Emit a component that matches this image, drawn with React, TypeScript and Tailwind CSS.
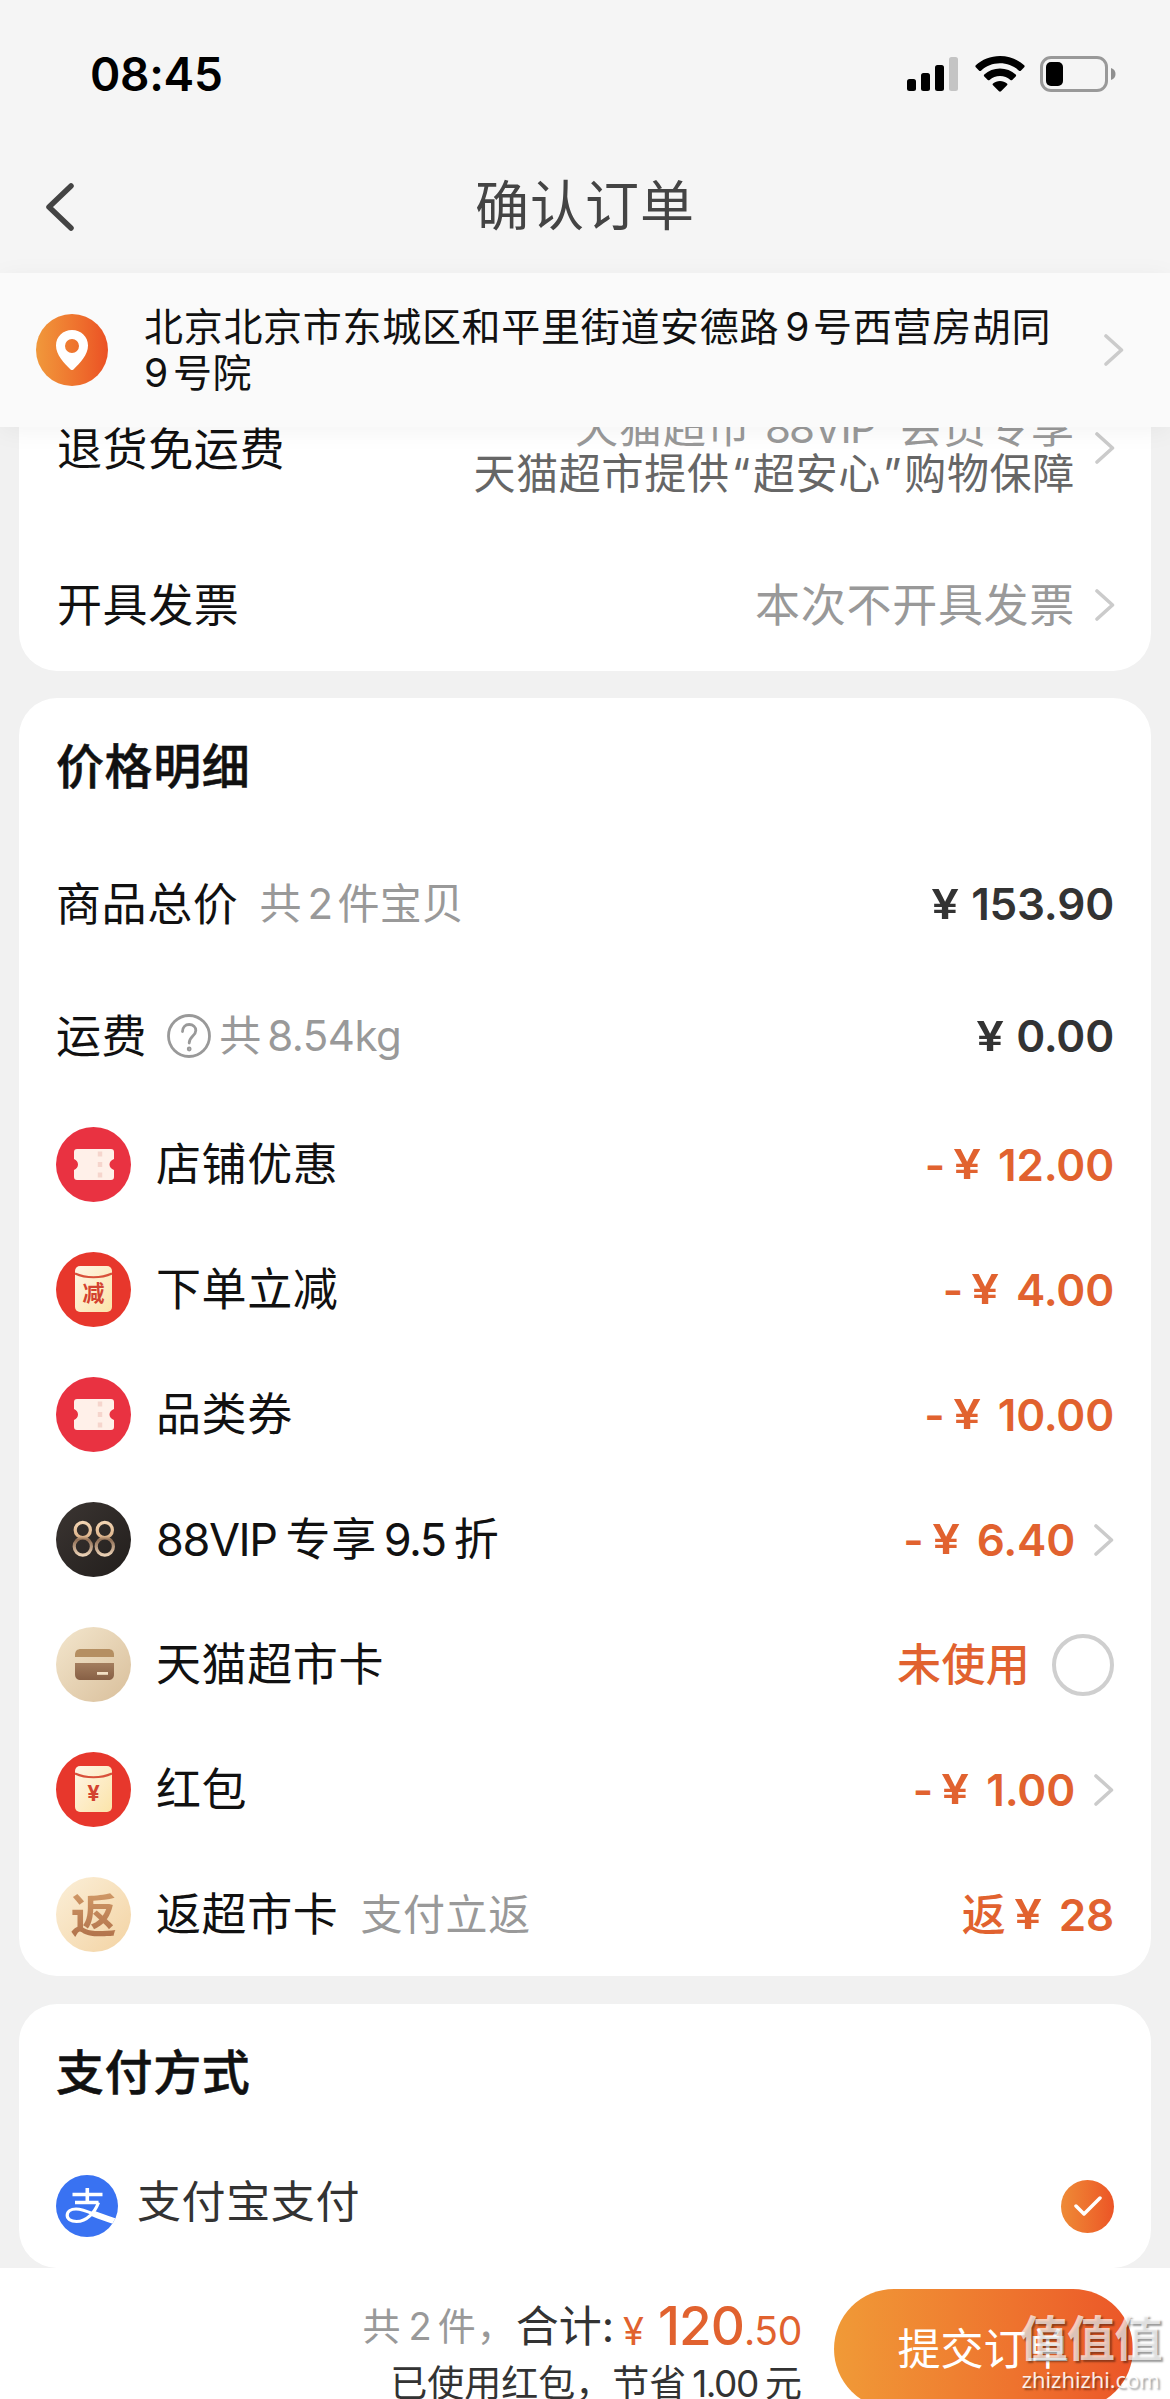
import type { ReactNode } from 'react';

interface PriceRowProps {
  icon: ReactNode;
  label: ReactNode;
  hint?: string;
  children: ReactNode;
}

const ChevronRight = ({ className = '' }: { className?: string }) => (
  <svg className={`h-8 w-5 shrink-0 ${className}`} viewBox="0 0 20 32" fill="none">
    <path d="M2 2 17.5 16 2 30" stroke="#cbcbcb" strokeWidth="3.6" strokeLinecap="round" strokeLinejoin="round" />
  </svg>
);

const StatusBar = () => (
  <div className="flex h-[147px] items-center justify-between pl-[90px] pr-[54px]">
    <span className="text-[46px] font-semibold leading-none tracking-[-0.3px] text-black">08:45</span>
    <div className="flex items-center">
      <svg className="h-[36px] w-[52px]" viewBox="0 0 52 36">
        <rect x="0" y="23" width="9" height="12" rx="2.5" fill="#000" />
        <rect x="14" y="17" width="9" height="18" rx="2.5" fill="#000" />
        <rect x="28" y="9" width="9" height="26" rx="2.5" fill="#000" />
        <rect x="42" y="1" width="9" height="34" rx="2.5" fill="#c4c4c4" />
      </svg>
      <svg className="ml-4 h-[36px] w-[50px]" viewBox="0 0 50 36">
        <path d="M25 0C15.600 0 7 3.500 .8 9.300c-.6.600-.6 1.300 0 1.900l3.400 3.500c.5.500 1.200.5 1.800 0C11 10 17.700 7.300 25 7.300S39 10 44 14.700c.6.500 1.300.5 1.800 0l3.400-3.500c.6-.6.6-1.300 0-1.900C43 3.500 34.400 0 25 0Z" />
        <path d="M25 12.600c-6 0-11.500 2.200-15.700 5.900-.6.600-.6 1.300 0 1.900l3.500 3.500c.5.500 1.200.5 1.800 0 2.800-2.500 6.400-4 10.400-4s7.600 1.500 10.400 4c.6.500 1.300.5 1.800 0l3.500-3.500c.6-.6.600-1.300 0-1.900-4.200-3.700-9.700-5.900-15.700-5.900Z" />
        <path d="M25 25c-2.700 0-5.100 1-7 2.500-.6.600-.6 1.200 0 1.800l6 6c.6.600 1.400.6 2 0l6-6c.6-.6.6-1.200 0-1.800-1.900-1.500-4.300-2.500-7-2.500Z" />
      </svg>
      <svg className="ml-[15px] h-[38px] w-[76px]" viewBox="0 0 76 38">
        <rect x="1.500" y="2.500" width="65" height="33" rx="9.500" fill="none" stroke="#999" strokeWidth="3" />
        <rect x="6" y="7" width="17" height="24" rx="5" fill="#000" />
        <path d="M71 13c3 1 4.500 3.300 4.500 6s-1.500 5-4.500 6Z" fill="#8f8f8f" />
      </svg>
    </div>
  </div>
);

const TicketIcon = () => (
  <svg className="size-[75px]" viewBox="0 0 75 75">
    <circle cx="37.500" cy="37.500" r="37.500" fill="#e93241" />
    <path d="M21 22h34c2 0 3 1 3 3v7c-2.800 1-4.500 3-4.500 5.500s1.700 4.500 4.500 5.500v7c0 2-1 3-3 3H21c-2 0-3-1-3-3v-7c2.500-1 4-3 4-5.500s-1.500-4.500-4-5.500v-7c0-2 1-3 3-3Z" fill="#fff0e9" />
    <path d="M44 24.500v5M44 35v5M44 45.500v5" stroke="#f6d5cd" strokeWidth="4.500" />
  </svg>
);

const EnvelopeIcon = ({ mark }: { mark: string }) => (
  <div className="relative size-[75px]">
    <svg className="size-full" viewBox="0 0 75 75">
      <defs>
        <linearGradient id="paper" x1="0" y1="0" x2="1" y2="1">
          <stop offset="0" stopColor="#fff5e6" />
          <stop offset="1" stopColor="#fbe4a9" />
        </linearGradient>
      </defs>
      <circle cx="37.500" cy="37.500" r="37.500" fill="#e7372c" />
      <rect x="19" y="14" width="37" height="46" rx="5" fill="url(#paper)" />
      <path d="M19 21.500c11 5 26 5 37 0" stroke="#d8503a" strokeWidth="2.200" fill="none" />
    </svg>
    <span className="absolute inset-x-0 top-[29px] text-center text-[22px] font-bold leading-[24px] text-[#d3422f]">{mark}</span>
  </div>
);

const Vip88Icon = () => (
  <svg className="size-[75px]" viewBox="0 0 75 75">
    <defs>
      <linearGradient id="vipBg" x1="0" y1="0" x2="1" y2="1">
        <stop offset="0" stopColor="#3b3532" />
        <stop offset="1" stopColor="#221e1c" />
      </linearGradient>
      <linearGradient id="vipGold" x1="0" y1="19" x2="0" y2="55" gradientUnits="userSpaceOnUse">
        <stop offset="0" stopColor="#f3d6b4" />
        <stop offset=".42" stopColor="#e0b78f" />
        <stop offset=".52" stopColor="#8f6e55" />
        <stop offset="1" stopColor="#f5dcc0" />
      </linearGradient>
    </defs>
    <circle cx="37.500" cy="37.500" r="37.500" fill="url(#vipBg)" />
    <g fill="none" stroke="url(#vipGold)" strokeWidth="3.200">
      <ellipse cx="26.800" cy="28" rx="7.600" ry="7.600" />
      <ellipse cx="26.800" cy="44.500" rx="8.600" ry="8.600" />
      <ellipse cx="48.800" cy="28" rx="7.600" ry="7.600" />
      <ellipse cx="48.800" cy="44.500" rx="8.600" ry="8.600" />
    </g>
  </svg>
);

const MarketCardIcon = () => (
  <svg className="size-[75px]" viewBox="0 0 75 75">
    <defs>
      <linearGradient id="cardBg" x1="0" y1="0" x2="1" y2="1">
        <stop offset="0" stopColor="#f3e6cd" />
        <stop offset="1" stopColor="#d9bf9b" />
      </linearGradient>
      <linearGradient id="cardFront" x1="0" y1="0" x2="0" y2="1">
        <stop offset="0" stopColor="#a37d5e" />
        <stop offset="1" stopColor="#876045" />
      </linearGradient>
    </defs>
    <circle cx="37.500" cy="37.500" r="37.500" fill="url(#cardBg)" />
    <path d="M19 30v-2c0-4 2-6 6-6h27c4 0 6 2 6 6v2Z" fill="#b58f62" />
    <path d="M19 36h39v11c0 4-2 6-6 6H25c-4 0-6-2-6-6Z" fill="url(#cardFront)" />
    <rect x="41" y="45" width="11" height="2.800" fill="#f1dfc4" />
  </svg>
);

const RebateIcon = () => (
  <div className="flex size-[75px] items-center justify-center rounded-full bg-gradient-to-br from-[#fbefd8] to-[#f3d3a3]">
    <span className="bg-gradient-to-b from-[#d19a68] to-[#b0714a] bg-clip-text text-[46px] font-bold leading-[50px] text-transparent">返</span>
  </div>
);

const AlipayIcon = () => (
  <svg className="size-[62px]" viewBox="0 0 62 62">
    <defs>
      <clipPath id="alipayClip">
        <circle cx="31" cy="31" r="31" />
      </clipPath>
    </defs>
    <g clipPath="url(#alipayClip)">
      <rect width="62" height="62" fill="#3972f2" />
      <g fill="none" stroke="#fff">
        <path d="M16.500 19.500h30M31.300 13v13.500M19 27.500h23.500" strokeWidth="3.600" />
        <path d="M42.500 27.500C39 37 31 46.500 20.500 46.500c-6 0-9.300-2.600-9.300-6.200 0-3.800 3.500-6.300 8.800-6.300 8 0 15 4.300 26 8.500" strokeWidth="3.200" />
        <path d="M36 38c8 3.500 15 5.500 26 9.500" strokeWidth="6" />
      </g>
    </g>
  </svg>
);

const Price = ({ value }: { value: string }) => (
  <span className="flex items-center">
    <span className="w-[28px] scale-x-[1.2] text-center text-[41px]">¥</span>
    <span className="ml-[12px] tracking-[-0.200px]">{value}</span>
  </span>
);

const Discount = ({ prefix, value }: { prefix?: string; value: string }) => (
  <span className="flex items-center">
    {prefix ? <span className="mr-[8px] font-medium">{prefix}</span> : <span className="mr-[8px]">-</span>}
    <span className="w-[28px] scale-x-[1.2] text-center text-[41px]">¥</span>
    <span className="ml-[17px] tracking-[-0.200px]">{value}</span>
  </span>
);

const PriceRow = ({ icon, label, hint, children }: PriceRowProps) => (
  <div className="flex h-[125px] items-center">
    {icon}
    <span className="ml-[25px] flex text-[45px] tracking-[0.600px]">{label}</span>
    {hint && <span className="ml-[22px] text-[42px] tracking-[0.600px] text-[#999]">{hint}</span>}
    <div className="ml-auto flex items-center text-[44px] font-semibold text-[#e1622f]">{children}</div>
  </div>
);

export default function App() {
  return (
    <div className="relative flex h-[2399px] w-[1170px] flex-col overflow-hidden bg-[#f1f1f1] font-[Inter,'Noto_Sans_CJK_SC',sans-serif] leading-none text-[#111]">
      <header className="h-[273px] shrink-0 bg-[#f5f5f5]">
        <StatusBar />
        <div className="grid h-[120px] grid-cols-[1fr_auto_1fr] items-center">
          <svg className="ml-[45px] h-[48px] w-[30px]" viewBox="0 0 30 48" fill="none">
            <path d="M26 3 4 24l22 21" stroke="#444" strokeWidth="5.500" strokeLinecap="round" strokeLinejoin="round" />
          </svg>
          <h1 className="text-[54px] tracking-[1px] text-[#444]">确认订单</h1>
        </div>
      </header>

      <section className="relative z-10 flex h-[154px] shrink-0 items-center bg-[#fafafa] pl-[36px] shadow-[0_4px_24px_rgba(0,0,0,0.05)]">
        <div className="flex size-[72px] items-center justify-center rounded-full bg-gradient-to-r from-[#f0983b] to-[#eb5024]">
          <svg className="h-[40px] w-[32px]" viewBox="0 0 32 40">
            <path fillRule="evenodd" d="M16 0C7 0 0 6.700 0 15.500 0 25 8 33 14.300 39.300c1 1 2.400 1 3.400 0C24 33 32 25 32 15.500 32 6.700 25 0 16 0Zm0 9a7 7 0 1 1 0 14 7 7 0 0 1 0-14Z" fill="#fff" />
          </svg>
        </div>
        <p className="ml-[36px] text-[39px] leading-[46px] tracking-[0.700px]">
          北京北京市东城区和平里街道安德路<span className="ml-[6px] mr-[3px]">9</span>号西营房胡同
          <br />9<span className="ml-[4px]">号院</span>
        </p>
        <ChevronRight className="ml-auto mr-[46px] h-[38px]" />
      </section>

      <main className="flex h-[1841px] shrink-0 flex-col px-[19px]">
        <section className="h-[244px] shrink-0 rounded-b-[38px] bg-white pl-[38px] pr-[36px]">
          <div className="flex h-[118px] items-start">
            <span className="text-[45px] tracking-[0.600px]">退货免运费</span>
            <div className="-mt-[23px] ml-auto mr-[20px] text-right text-[42px] leading-[46px] tracking-[0.700px] text-[#666]">
              <p className="text-[43px] tracking-[1px] text-[#999]">
                天猫超市<span className="ml-[14px] mr-[24px] text-[42px] tracking-[-1.800px]">88VIP</span>会员专享
              </p>
              <p>
                天猫超市提供<span className="mx-[2px]">“</span>超安心<span className="mx-[2px]">”</span>购物保障
              </p>
            </div>
            <ChevronRight className="mt-[5px]" />
          </div>
          <div className="flex h-[120px] items-center">
            <span className="text-[45px] tracking-[0.600px]">开具发票</span>
            <span className="ml-auto mr-[20px] text-[45px] tracking-[0.700px] text-[#999]">本次不开具发票</span>
            <ChevronRight />
          </div>
        </section>

        <section className="mt-[27px] h-[1278px] shrink-0 rounded-[38px] bg-white pl-[37px] pr-[37px]">
          <div className="flex h-[140px] items-center pb-[2px]">
            <h2 className="text-[48px] font-medium tracking-[0.600px] [-webkit-text-stroke:0.500px_#111]">价格明细</h2>
          </div>
          <div className="flex h-[132px] items-center">
            <span className="text-[45px] tracking-[0.600px]">商品总价</span>
            <span className="ml-[21px] text-[42px] tracking-[0.200px] text-[#999]">
              共<span className="ml-[6px] mr-[4px]">2</span>件宝贝
            </span>
            <div className="ml-auto text-[44px] font-semibold text-[#333]">
              <Price value="153.90" />
            </div>
          </div>
          <div className="flex h-[132px] items-center">
            <span className="text-[45px] tracking-[0.600px]">运费</span>
            <svg className="ml-[20px] size-[44px]" viewBox="0 0 44 44" fill="none" stroke="#999" strokeWidth="2.800">
              <circle cx="22" cy="22" r="20.500" />
              <path d="M15.500 17.500c0-4.300 2.800-7 6.700-7s6.600 2.500 6.600 6c0 5.500-6.600 5.500-6.600 12.500" strokeLinecap="round" />
              <circle cx="22.200" cy="35" r="1" />
            </svg>
            <span className="ml-[8px] text-[42px] text-[#999]">
              共<span className="ml-[6px] tracking-[-0.500px]">8.54kg</span>
            </span>
            <div className="ml-auto text-[44px] font-semibold text-[#333]">
              <Price value="0.00" />
            </div>
          </div>

          <PriceRow icon={<TicketIcon />} label="店铺优惠">
            <Discount value="12.00" />
          </PriceRow>
          <PriceRow icon={<EnvelopeIcon mark="减" />} label="下单立减">
            <Discount value="4.00" />
          </PriceRow>
          <PriceRow icon={<TicketIcon />} label="品类券">
            <Discount value="10.00" />
          </PriceRow>
          <PriceRow
            icon={<Vip88Icon />}
            label={
              <>
                <span className="tracking-[-1.400px]">88VIP</span>
                <span className="ml-[9px] mr-[7px]">专享</span>
                <span className="tracking-[-1.500px]">9.5</span>
                <span className="ml-[8px]">折</span>
              </>
            }
          >
            <Discount value="6.40" />
            <ChevronRight className="ml-[19px]" />
          </PriceRow>
          <PriceRow icon={<MarketCardIcon />} label="天猫超市卡">
            <span className="font-medium tracking-[0.300px]">未使用</span>
            <span className="ml-[22px] size-[62px] rounded-full border-[4px] border-[#cfcfcf]" />
          </PriceRow>
          <PriceRow icon={<EnvelopeIcon mark="¥" />} label="红包">
            <Discount value="1.00" />
            <ChevronRight className="ml-[19px]" />
          </PriceRow>
          <PriceRow icon={<RebateIcon />} label="返超市卡" hint="支付立返">
            <Discount prefix="返" value="28" />
          </PriceRow>
        </section>

        <section className="mt-[28px] h-[264px] shrink-0 rounded-[38px] bg-white pl-[37px] pr-[37px]">
          <div className="flex h-[140px] items-center pb-[2px]">
            <h2 className="text-[48px] font-medium tracking-[0.600px] [-webkit-text-stroke:0.500px_#111]">支付方式</h2>
          </div>
          <div className="flex h-[124px] items-center">
            <AlipayIcon />
            <span className="ml-[19px] pb-[9px] text-[44px] tracking-[0.600px] text-[#333]">支付宝支付</span>
            <div className="ml-auto flex size-[53px] items-center justify-center rounded-full bg-gradient-to-r from-[#ee8a36] to-[#ec5426]">
              <svg className="h-[20px] w-[28px]" viewBox="0 0 28 20" fill="none">
                <path d="m2 10 8 8L26 2" stroke="#fff" strokeWidth="3.500" strokeLinecap="round" strokeLinejoin="round" />
              </svg>
            </div>
          </div>
        </section>
      </main>

      <footer className="flex h-[162px] shrink-0 items-start justify-end bg-white pr-[37px] pt-[21px]">
        <div className="mr-[32px] flex flex-col items-end">
          <div className="flex h-[74px] items-center">
            <span className="text-[38px] tracking-[1px] text-[#999]">
              共<span className="ml-[7px] mr-[5px]">2</span>件，
            </span>
            <span className="text-[43px] text-[#333]">合计:</span>
            <span className="ml-[9px] flex items-baseline text-[#e1622f]">
              <span className="text-[38px]">¥</span>
              <span className="ml-[14px] text-[53px] font-medium tracking-[-1px]">120</span>
              <span className="text-[39px] tracking-[-0.300px]">.50</span>
            </span>
          </div>
          <p className="flex h-[40px] items-center whitespace-nowrap text-[37px] text-[#333]">
            已使用红包，节省<span className="ml-[6px] mr-[7px] tracking-[-1.400px]">1.00</span>元
          </p>
        </div>
        <button
          type="button"
          className="flex h-[120px] w-[299px] shrink-0 items-center justify-center rounded-full bg-gradient-to-r from-[#f09a37] to-[#eb5528] text-[43px] text-white"
        >
          提交订单
        </button>
      </footer>

      {/* site watermark over the corner */}
      <div className="absolute bottom-[7px] right-[8px] flex flex-col items-center text-white/70 [text-shadow:2px_2px_2px_rgba(0,0,0,0.4)]">
        <span className="text-[48px] font-bold leading-[54px] tracking-[-0.500px]">值值值</span>
        <span className="text-[22px] leading-[26px] text-white/90 [font-family:'Open_Sans',sans-serif]">zhizhizhi.com</span>
      </div>
    </div>
  );
}
